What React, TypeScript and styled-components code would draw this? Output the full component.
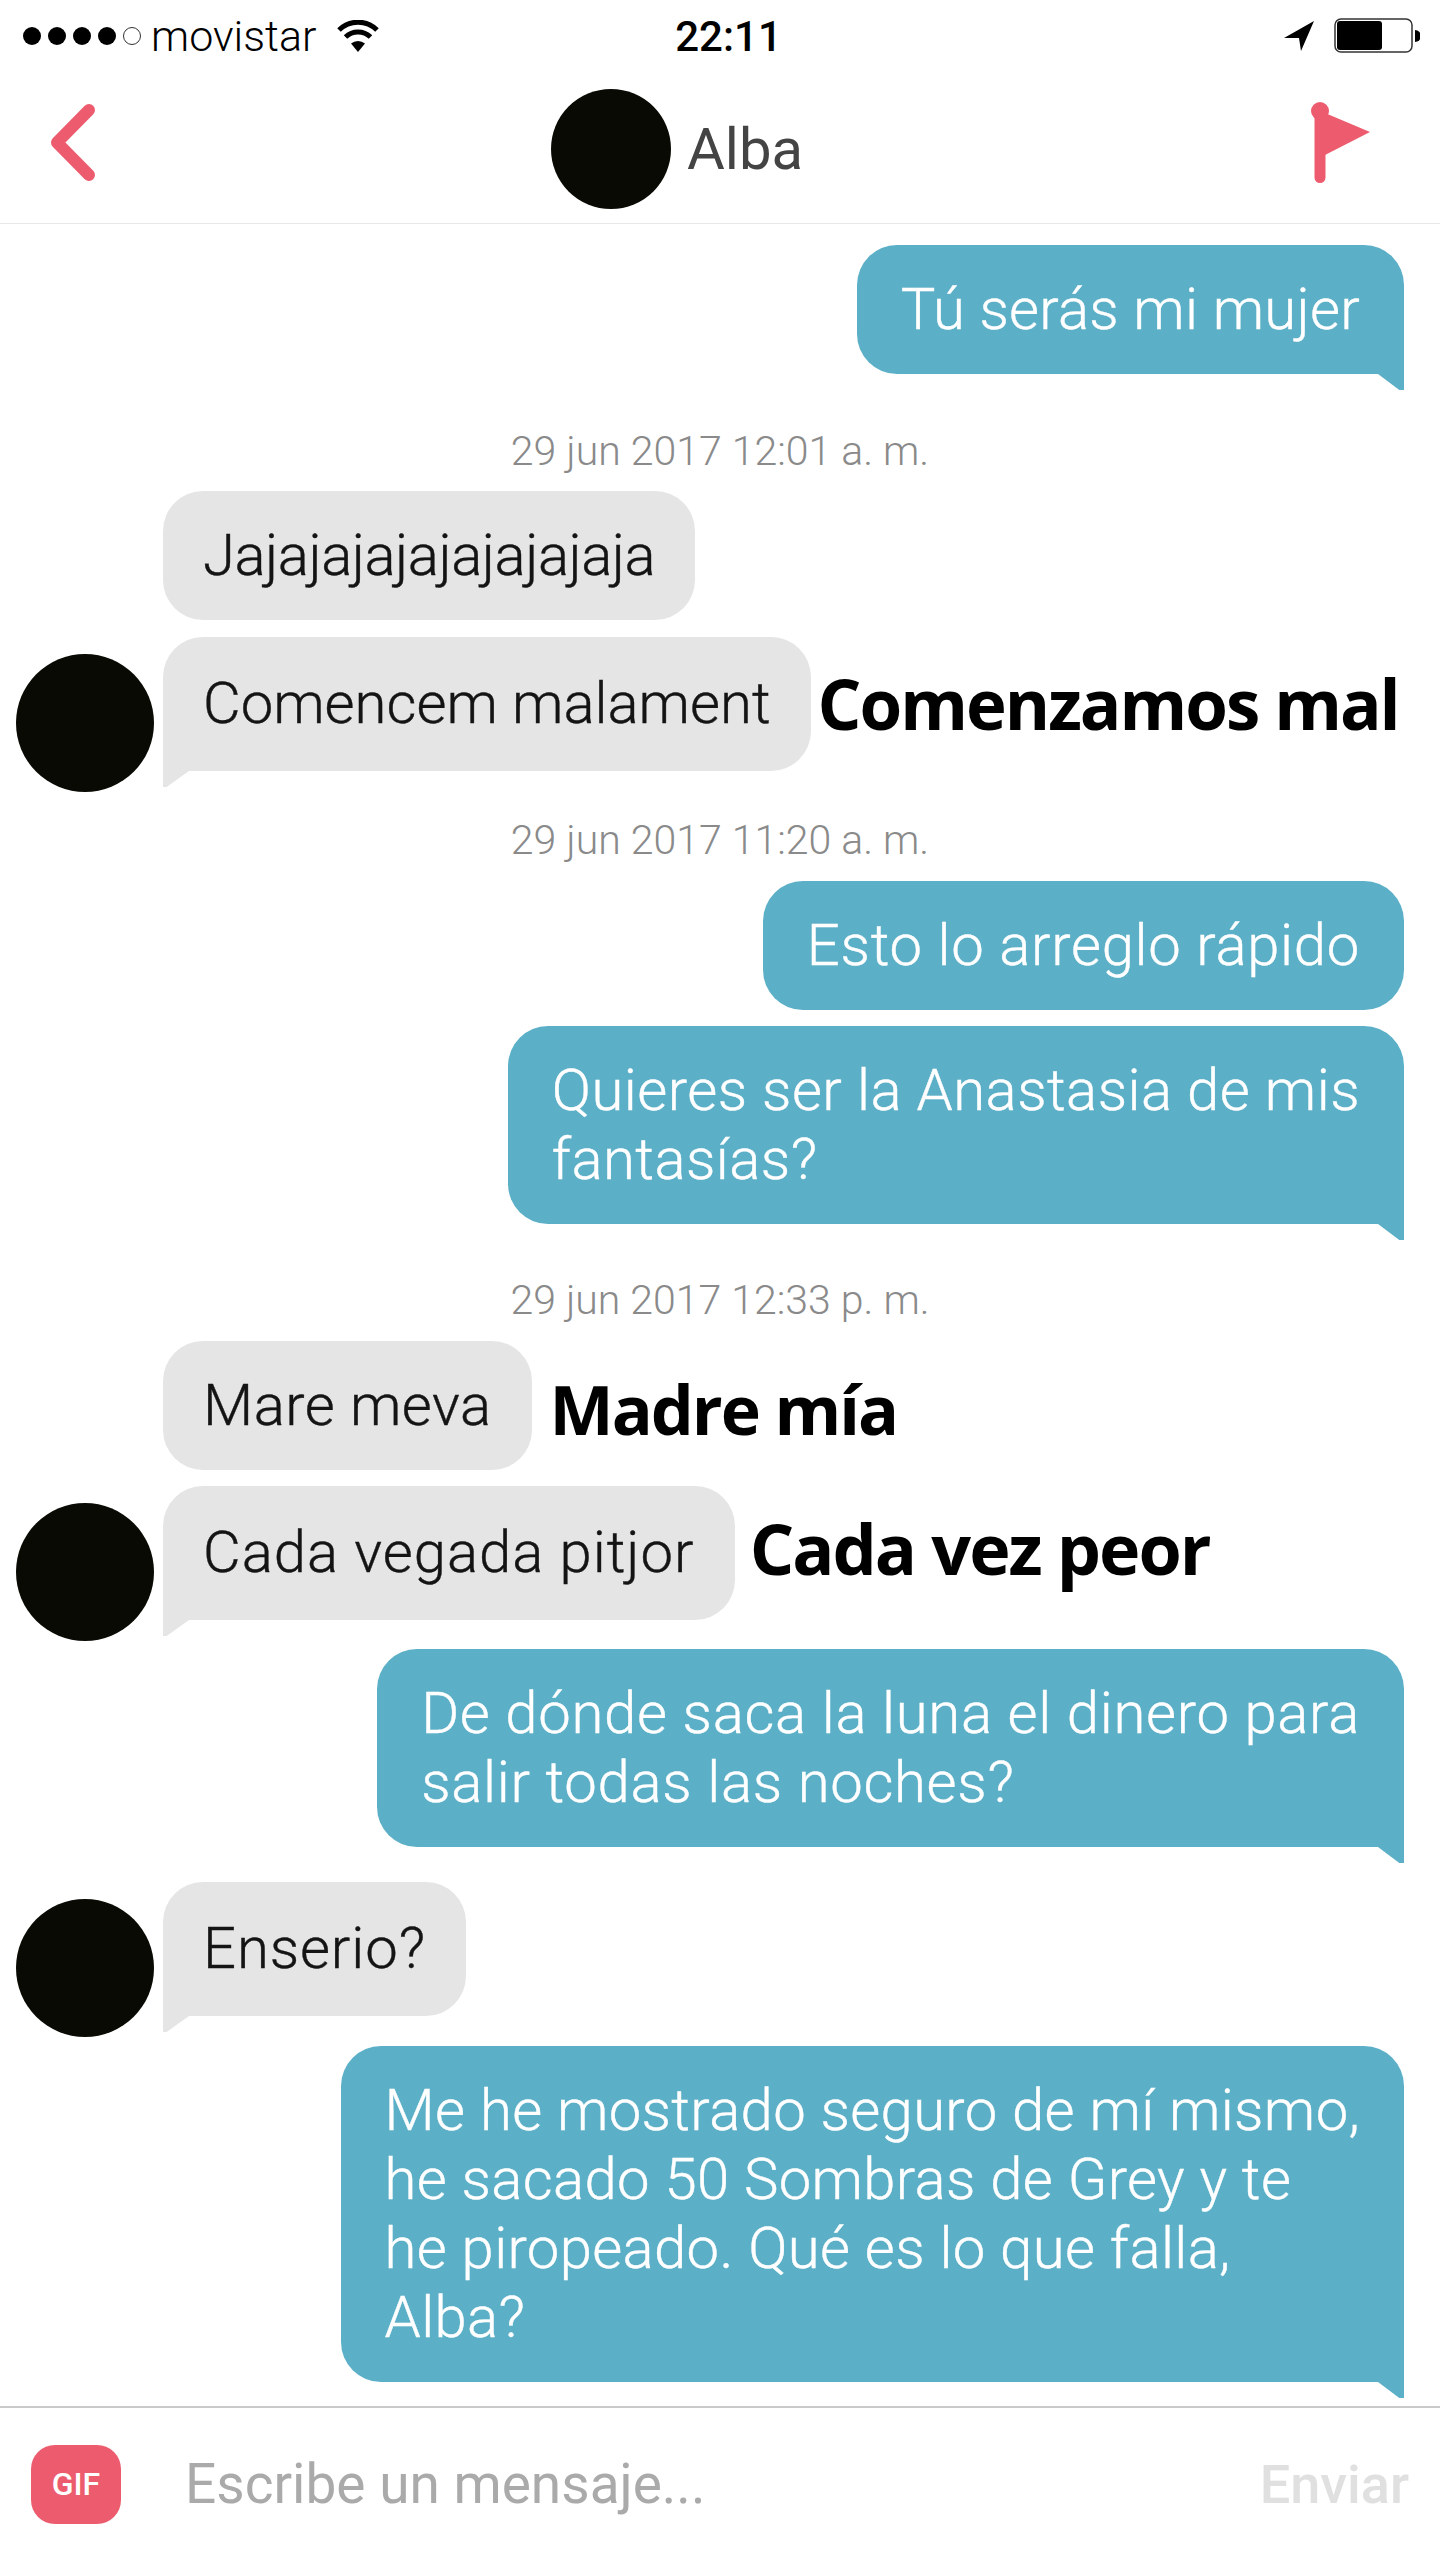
import styled, { createGlobalStyle } from "styled-components";

const GlobalStyle = createGlobalStyle`
  html, body {
    margin: 0;
    padding: 0;
    background: #fff;
  }
  body {
    font-family: "Roboto", "Liberation Sans", sans-serif;
  }
`;

const Page = styled.div`
  width: 1440px;
  height: 2560px;
  display: flex;
  flex-direction: column;
  overflow: hidden;
  background: #fff;
`;

const StatusBar = styled.div`
  height: 72px;
  display: grid;
  grid-template-columns: 1fr auto 1fr;
  align-items: center;
  padding: 0 20px 0 23px;
  color: #000;
`;

const StatusLeft = styled.div`
  display: flex;
  align-items: center;
`;

const StatusRight = styled.div`
  display: flex;
  align-items: center;
  justify-content: flex-end;
  gap: 20px;
`;

const Signal = styled.div`
  display: flex;
  gap: 7px;
  margin-right: 10px;
`;

const SignalDot = styled.span<{ $off?: boolean }>`
  width: 18px;
  height: 18px;
  border-radius: 50%;
  box-sizing: border-box;
  background: ${(p) => (p.$off ? "transparent" : "#000")};
  border: ${(p) => (p.$off ? "1.5px solid #333" : "none")};
`;

const Carrier = styled.span`
  font-size: 43px;
  font-weight: 300;
  margin-right: 20px;
`;

const Clock = styled.span`
  font-size: 42px;
  font-weight: 500;
  margin-left: 14px;
`;

const NavBar = styled.header`
  height: 151px;
  border-bottom: 1px solid #e8e8e8;
  display: flex;
  align-items: center;
  justify-content: space-between;
  padding: 0 70px 0 50px;
`;

const NavIcon = styled.svg`
  margin-bottom: 10px;
`;

const Peer = styled.div`
  display: flex;
  align-items: center;
  gap: 16px;
  margin: 2px 52px 0 0;
`;

const PeerPhoto = styled.div`
  width: 120px;
  height: 120px;
  border-radius: 50%;
  background: #0a0a04;
`;

const PeerName = styled.span`
  font-size: 58px;
  font-weight: 400;
  color: #444;
`;

const Chat = styled.main`
  flex: 1;
  display: flex;
  flex-direction: column;
  padding-top: 21px;
`;

const Stamp = styled.div<{ $top: number; $bottom: number }>`
  margin: ${(p) => p.$top}px 0 ${(p) => p.$bottom}px;
  height: 44px;
  line-height: 44px;
  text-align: center;
  font-size: 41px;
  font-weight: 300;
  color: #8a8a8a;
`;

const OutRow = styled.div<{ $top?: number }>`
  display: flex;
  justify-content: flex-end;
  padding-right: 36px;
  margin-top: ${(p) => p.$top ?? 0}px;
`;

const InRow = styled.div<{ $top?: number }>`
  display: flex;
  align-items: center;
  padding-left: 163px;
  position: relative;
  margin-top: ${(p) => p.$top ?? 0}px;
`;

const InAvatar = styled.div`
  position: absolute;
  left: 16px;
  bottom: -21px;
  width: 138px;
  height: 138px;
  border-radius: 50%;
  background: #0a0a04;
`;

const Bubble = styled.div<{ $out?: boolean; $tail?: boolean; $track?: number }>`
  position: relative;
  box-sizing: border-box;
  white-space: nowrap;
  font-size: 58px;
  font-weight: 300;
  -webkit-text-stroke: 0.4px currentColor;
  line-height: 69px;
  letter-spacing: ${(p) => p.$track ?? (p.$out ? 0.25 : 0)}px;
  padding: ${(p) =>
    p.$out ? "30px 44px" : p.$tail ? "32px 40px 33px" : "30px 40px"};
  border-radius: ${(p) =>
    !p.$tail ? "40px" : p.$out ? "40px 40px 0 40px" : "40px 40px 40px 0"};
  background: ${(p) => (p.$out ? "#5bafc7" : "#e5e5e5")};
  color: ${(p) => (p.$out ? "#fff" : "#141414")};

  ${(p) =>
    p.$tail &&
    `&::after {
      content: "";
      position: absolute;
      top: 100%;
      ${p.$out ? "right: 0;" : "left: 0;"}
      width: 26px;
      height: 16px;
      background: ${p.$out ? "#5bafc7" : "#e5e5e5"};
      clip-path: ${
        p.$out
          ? "polygon(0 0, 100% 0, 100% 100%, 82% 100%)"
          : "polygon(0 0, 100% 0, 14% 100%, 0 100%)"
      };
    }`}
`;

const Note = styled.span<{ $size: number; $gap: number; $nudge?: number }>`
  margin-left: ${(p) => p.$gap}px;
  margin-top: ${(p) => p.$nudge ?? 0}px;
  font-family: "Open Sans", "Liberation Sans", sans-serif;
  font-size: ${(p) => p.$size}px;
  font-weight: 700;
  letter-spacing: -2px;
  color: #000;
  white-space: nowrap;
`;

const Composer = styled.footer`
  height: 152px;
  border-top: 2px solid #c9c9c9;
  display: flex;
  align-items: center;
  padding: 0 31px;
`;

const GifButton = styled.div`
  width: 90px;
  height: 79px;
  border-radius: 24px;
  background: #ec5c6e;
  color: #fff;
  display: flex;
  align-items: center;
  justify-content: center;
  font-size: 32px;
  font-weight: 500;
`;

const Placeholder = styled.span`
  flex: 1;
  margin-left: 64px;
  font-size: 55px;
  font-weight: 400;
  color: #aaa;
`;

const SendButton = styled.span`
  font-size: 54px;
  font-weight: 500;
  color: #e0e0e0;
`;

export default function App() {
  return (
    <Page>
      <GlobalStyle />
      <StatusBar>
        <StatusLeft>
          <Signal>
            <SignalDot />
            <SignalDot />
            <SignalDot />
            <SignalDot />
            <SignalDot $off />
          </Signal>
          <Carrier>movistar</Carrier>
          <svg width="44" height="32" viewBox="0 0 44 32">
            <path d="M22 32 L15 23.5 A11 11 0 0 1 29 23.5 Z" fill="#000" />
            <path d="M9.5 17 A18 18 0 0 1 34.5 17" fill="none" stroke="#000" strokeWidth="5" />
            <path d="M3 10 A27 27 0 0 1 41 10" fill="none" stroke="#000" strokeWidth="5" />
          </svg>
        </StatusLeft>
        <Clock>22:11</Clock>
        <StatusRight>
          <svg width="30" height="30" viewBox="0 0 30 30">
            <path d="M30 0 L0 17 L15 17 L17 30 Z" fill="#000" />
          </svg>
          <svg width="86" height="36" viewBox="0 0 86 36">
            <rect x="1" y="1" width="77" height="33" rx="6" fill="none" stroke="#333" strokeWidth="1.5" />
            <rect x="3" y="3" width="45" height="29" rx="3" fill="#000" />
            <path d="M81 12 A6 6 0 0 1 81 24 Z" fill="#000" />
          </svg>
        </StatusRight>
      </StatusBar>

      <NavBar>
        <NavIcon width="45" height="77" viewBox="0 0 45 77">
          <path d="M39 6 L7 38.5 L39 71" fill="none" stroke="#ec5c6e" strokeWidth="12" strokeLinecap="round" strokeLinejoin="round" />
        </NavIcon>
        <Peer>
          <PeerPhoto />
          <PeerName>Alba</PeerName>
        </Peer>
        <NavIcon width="59" height="81" viewBox="0 0 59 81">
          <circle cx="9" cy="9" r="9" fill="#ec5c6e" />
          <rect x="3.5" y="9" width="11" height="72" rx="5.5" fill="#ec5c6e" />
          <path d="M14 11 L59 30 L14 53 Z" fill="#ec5c6e" />
        </NavIcon>
      </NavBar>

      <Chat>
        <OutRow>
          <Bubble $out $tail>Tú serás mi mujer</Bubble>
        </OutRow>

        <Stamp $top={55} $bottom={18}>29 jun 2017 12:01 a. m.</Stamp>

        <InRow>
          <Bubble $track={-0.5}>Jajajajajajajajajaja</Bubble>
        </InRow>
        <InRow $top={17}>
          <InAvatar />
          <Bubble $tail>Comencem malament</Bubble>
          <Note $size={69} $gap={7} $nudge={-2}>Comenzamos mal</Note>
        </InRow>

        <Stamp $top={47} $bottom={19}>29 jun 2017 11:20 a. m.</Stamp>

        <OutRow>
          <Bubble $out $track={0.7}>Esto lo arreglo rápido</Bubble>
        </OutRow>
        <OutRow $top={16}>
          <Bubble $out $tail $track={0.45}>
            Quieres ser la Anastasia de mis
            <br />
            fantasías?
          </Bubble>
        </OutRow>

        <Stamp $top={54} $bottom={19}>29 jun 2017 12:33 p. m.</Stamp>

        <InRow>
          <Bubble $track={0.5}>Mare meva</Bubble>
          <Note $size={68} $gap={18} $nudge={6}>Madre mía</Note>
        </InRow>
        <InRow $top={16}>
          <InAvatar />
          <Bubble $tail $track={1}>Cada vegada pitjor</Bubble>
          <Note $size={70} $gap={15} $nudge={-10}>Cada vez peor</Note>
        </InRow>

        <OutRow $top={29}>
          <Bubble $out $tail $track={0.7}>
            De dónde saca la luna el dinero para
            <br />
            salir todas las noches?
          </Bubble>
        </OutRow>

        <InRow $top={35}>
          <InAvatar />
          <Bubble $tail $track={0.9}>Enserio?</Bubble>
        </InRow>

        <OutRow $top={30}>
          <Bubble $out $tail $track={0.35}>
            Me he mostrado seguro de mí mismo,
            <br />
            he sacado 50 Sombras de Grey y te
            <br />
            he piropeado. Qué es lo que falla,
            <br />
            Alba?
          </Bubble>
        </OutRow>
      </Chat>

      <Composer>
        <GifButton>GIF</GifButton>
        <Placeholder>Escribe un mensaje...</Placeholder>
        <SendButton>Enviar</SendButton>
      </Composer>
    </Page>
  );
}
